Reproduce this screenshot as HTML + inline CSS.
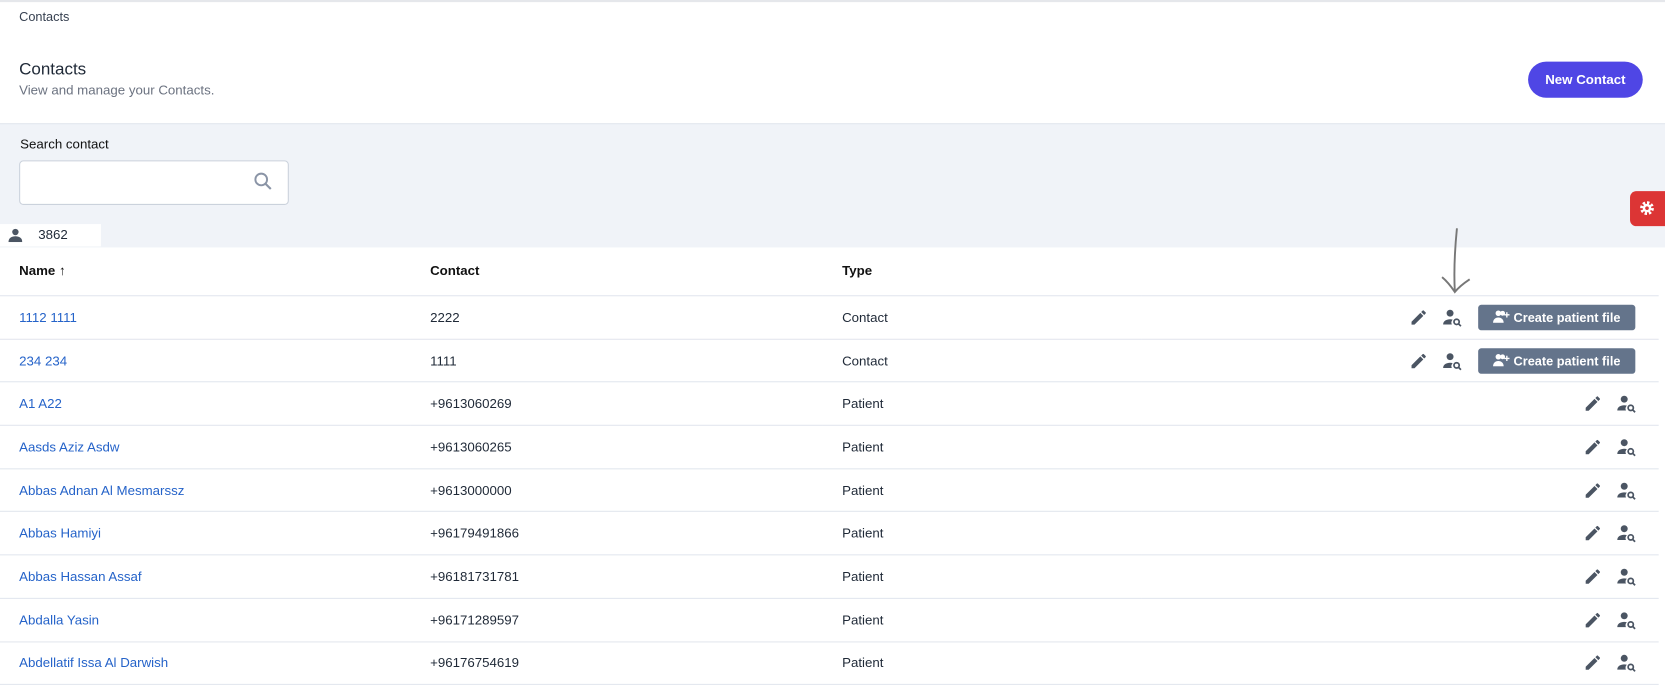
<!DOCTYPE html>
<html><head><style>
body{margin:0;width:1665px;height:687px;background:#fff;overflow:hidden}
#w{position:absolute;left:0;top:0;width:1568px;height:647px;transform:scale(1.0619);transform-origin:0 0;font-family:"Liberation Sans",sans-serif;color:#1f2937}
.top{position:absolute;left:0;top:0;width:1568px;height:2px;background:#e5e7eb}
.bc{position:absolute;left:18px;top:9px;font-size:12px;color:#374151}
.h1{position:absolute;left:18px;top:57px;font-size:16px;color:#1f2937}
.sub{position:absolute;left:18px;top:78px;font-size:12.5px;color:#6b7280}
.btn{position:absolute;left:1439px;top:58px;width:108px;height:34px;border-radius:17px;background:#4f46e5;color:#fff;font-size:12.5px;font-weight:bold;text-align:center;line-height:34px}
.gray{position:absolute;left:0;top:116px;width:1568px;height:116px;background:#f0f3f8;border-top:1px solid #e2e6ee}
.sl{position:absolute;left:19px;top:129px;font-size:12.5px;color:#111}
.inp{position:absolute;left:18px;top:151px;width:252px;height:40px;border:1px solid #cbd2dc;border-radius:4px;background:#fff}
.cnt{position:absolute;left:0;top:211px;width:95px;height:21px;background:#fff;font-size:12.5px;line-height:20px}
.gear{position:absolute;left:1535px;top:180px;width:33px;height:33px;background:#dc3535;border-radius:6px 0 0 6px}
table{position:absolute;left:0;top:232px;width:1562px;border-collapse:collapse;font-size:12.5px;table-layout:fixed}
td,th{padding:0 0 0 18px;text-align:left;border-bottom:1px solid #e2e6ee;height:39.7px;white-space:nowrap}
th{height:46px;font-weight:bold;color:#111}
td.n{color:#2563c9}
.a{text-align:right;padding-right:20px}
.ic{display:inline-block;vertical-align:middle;margin-left:13px}
.cp{display:inline-block;vertical-align:middle;background:#64748b;color:#fff;border-radius:3px;height:24px;line-height:24px;width:148px;text-align:center;margin-left:14px;font-size:12px;font-weight:bold;margin-right:2px}
</style></head><body><div id="w">
<div class="top"></div>
<div class="bc">Contacts</div>
<div class="h1">Contacts</div>
<div class="sub">View and manage your Contacts.</div>
<div class="btn">New Contact</div>
<div class="gray"></div>
<div class="sl">Search contact</div>
<div class="inp"><svg style="position:absolute;left:220px;top:10px" width="18" height="18" viewBox="0 0 18 18"><circle cx="7" cy="7" r="5.5" fill="none" stroke="#8a94a6" stroke-width="1.8"/><path d="M11 11l5 5" stroke="#8a94a6" stroke-width="2"/></svg></div>
<div class="cnt"><svg style="position:absolute;left:8px;top:4px" width="13" height="13" viewBox="0 0 13 13"><circle cx="6.5" cy="3.5" r="3" fill="#4b5563"/><path d="M0 13c0-4 3-5.5 6.5-5.5S13 9 13 13z" fill="#4b5563"/></svg><span style="position:absolute;left:36px;top:0">3862</span></div>
<div class="gear"><svg style="position:absolute;left:8px;top:8px" width="16" height="16" viewBox="0 0 16 16"><circle cx="8" cy="8" r="5" fill="none" stroke="#fff" stroke-width="3" stroke-dasharray="2.2 1.7"/><circle cx="8" cy="8" r="4" fill="#fff"/><circle cx="8" cy="8" r="1.7" fill="#dc3535"/></svg></div>
<svg style="position:absolute;left:1340px;top:210px" width="50" height="70"><path d="M32 5 C30 25 29 45 30 64 M18 51 C24 56 28 62 30 65 C34 60 38 57 44 53" fill="none" stroke="#777" stroke-width="1.8"/></svg>
<table>
<colgroup><col style="width:387px"><col style="width:388px"><col style="width:300px"><col></colgroup>
<tr><th>Name ↑</th><th>Contact</th><th>Type</th><th></th></tr>
</table>
</div>
<script>
var P='<svg class="ic" width="18" height="18" viewBox="0 0 24 24"><path d="M3 17.25V21h3.75L17.81 9.94l-3.75-3.75zM20.71 7.04a1 1 0 000-1.41l-2.34-2.34a1 1 0 00-1.41 0l-1.83 1.83 3.75 3.75z" fill="#4b5563"/></svg>';
var U='<svg class="ic" width="20" height="18" viewBox="0 0 24 22"><circle cx="9" cy="6" r="4" fill="#4b5563"/><path d="M1 19c0-4 4-6 8-6 1 0 2 .1 3 .4A5 5 0 0011 19z" fill="#4b5563"/><circle cx="16.5" cy="16" r="3" fill="none" stroke="#4b5563" stroke-width="2"/><path d="M18.7 18.2L21.5 21" stroke="#4b5563" stroke-width="2"/></svg>';
var C='<span class="cp"><svg width="16" height="12" viewBox="0 0 16 12" style="vertical-align:-1px"><circle cx="5" cy="3" r="2.6" fill="#fff"/><path d="M0 12c0-3 2-5 5-5s5 2 5 5z" fill="#fff"/><circle cx="9" cy="3" r="2.3" fill="#fff"/><path d="M13 2v5M10.5 4.5h5" stroke="#fff" stroke-width="1.3"/></svg> Create patient file</span>';
var rows=[["1112 1111","2222","Contact",1],["234 234","1111","Contact",1],["A1 A22","+9613060269","Patient"],["Aasds Aziz Asdw","+9613060265","Patient"],["Abbas Adnan Al Mesmarssz","+9613000000","Patient"],["Abbas Hamiyi","+96179491866","Patient"],["Abbas Hassan Assaf","+96181731781","Patient"],["Abdalla Yasin","+96171289597","Patient"],["Abdellatif Issa Al Darwish","+96176754619","Patient"]];
var h='';rows.forEach(function(r){h+='<tr><td class="n">'+r[0]+'</td><td>'+r[1]+'</td><td>'+r[2]+'</td><td class="a">'+P+U+(r[3]?C:'')+'</td></tr>';});
document.querySelector('table').insertAdjacentHTML('beforeend',h);
</script>
</body></html>
